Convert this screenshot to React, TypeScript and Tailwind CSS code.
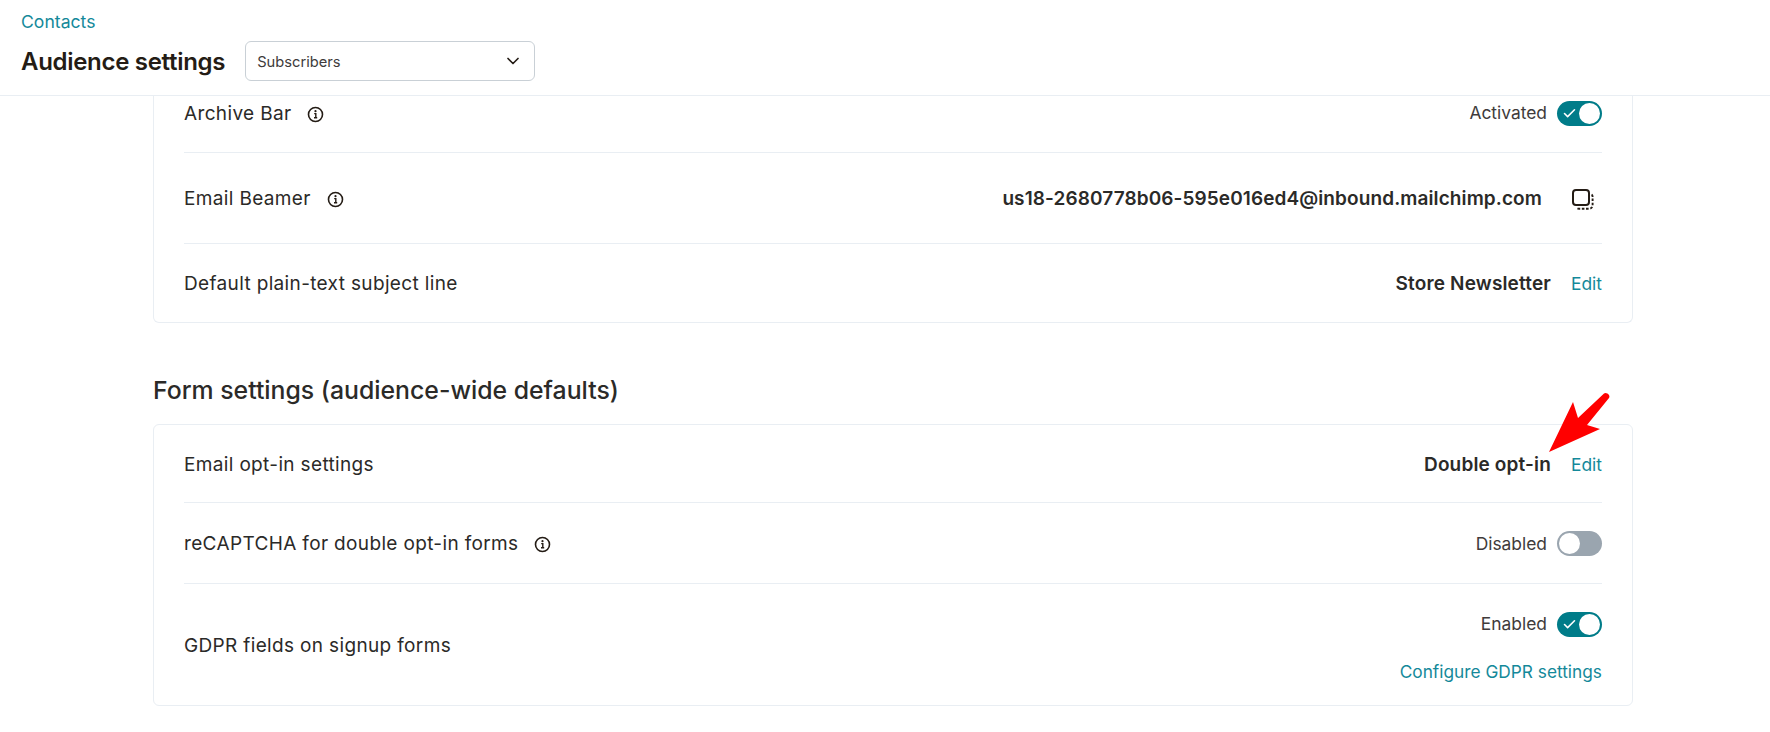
import { Check, ChevronDown } from 'lucide-react';
import type { ReactNode } from 'react';

function InfoIcon() {
  return (
    <svg width="17" height="17" viewBox="0 0 17 17" fill="none" className="shrink-0 text-[#241c15]">
      <circle cx="8.5" cy="8.5" r="7" stroke="currentColor" strokeWidth="1.6" />
      <circle cx="8.5" cy="5.2" r="1.1" fill="currentColor" />
      <path d="M7.2 7.6h1.6v4M7 11.8h3.2" stroke="currentColor" strokeWidth="1.4" />
    </svg>
  );
}

function CopyIcon() {
  return (
    <svg width="22" height="21" viewBox="0 0 22 21" fill="none" className="text-[#241c15]">
      <rect x="1" y="1" width="16" height="15" rx="3" stroke="currentColor" strokeWidth="2" />
      <path
        d="M19.6 5.5c.7.5 1 1.2 1 2.2v8.4c0 2.2-1.4 3.6-3.6 3.6H7c-1.3 0-2.2-.5-2.6-1.4"
        stroke="currentColor"
        strokeWidth="1.9"
        strokeDasharray="2.6 1.6"
      />
    </svg>
  );
}

function Toggle({ on, label }: { on: boolean; label: string }) {
  return (
    <div className="flex items-center gap-[10px]">
      <span className="text-[17.4px] text-[#403b3b]">{label}</span>
      <span
        className={`flex h-[25px] w-[45px] items-center rounded-full p-[2px] ${
          on ? 'justify-end bg-[#007c89]' : 'justify-start bg-[#9aa5af]'
        }`}
      >
        {on && <Check size={15} strokeWidth={2.5} className="mr-auto ml-[3px] text-white" />}
        <span className="h-[21px] w-[21px] rounded-full bg-white" />
      </span>
    </div>
  );
}

function Row({
  label,
  info,
  className,
  children,
}: {
  label: string;
  info?: boolean;
  className: string;
  children: ReactNode;
}) {
  return (
    <div className={`flex items-center justify-between border-[#e9eef3] ${className}`}>
      <div className="flex items-center gap-[16px] text-[19px] tracking-[0.35px] text-[#2b2a28]">
        {label}
        {info && <InfoIcon />}
      </div>
      <div>{children}</div>
    </div>
  );
}

function Value({ text }: { text: string }) {
  return (
    <div className="flex items-center gap-[20px]">
      <span className="text-[19px] font-semibold tracking-[0.15px] text-[#2b2a28]">{text}</span>
      <a className="text-[17.4px] text-[#14899a]">Edit</a>
    </div>
  );
}

export default function App() {
  return (
    <div className="relative h-[732px] overflow-hidden bg-white font-['Inter',sans-serif]">
      <header className="h-[96px] border-b border-[#e9eef3] pl-[21px] pt-[12px]">
        <a className="block text-[17.6px] leading-[20px] text-[#14899a]">Contacts</a>
        <div className="mt-[9px] flex items-center gap-[20px]">
          <h1 className="translate-y-[1px] text-[24px] font-semibold tracking-[-0.3px] text-[#241c15]">
            Audience settings
          </h1>
          <div className="flex h-[40px] w-[290px] items-center justify-between rounded-[6px] border border-[#c9d0d6] pl-[11px] pr-[11px] text-[14.7px] text-[#403b3b]">
            <span className="translate-y-[1px]">Subscribers</span>
            <ChevronDown size={20} className="text-[#241c15]" />
          </div>
        </div>
      </header>

      <main className="ml-[153px] w-[1480px]">
        <section className="rounded-b-[6px] border-x border-b border-[#e9eef3] px-[30px]">
          <Row label="Archive Bar" info className="h-[57px] items-start border-b pt-[4px]">
            <Toggle on label="Activated" />
          </Row>
          <Row label="Email Beamer" info className="h-[91px] border-b pt-[3px]">
            <div className="flex items-center gap-[30px] pr-[8px]">
              <span className="text-[19px] font-semibold tracking-[0.1px] text-[#2b2a28]">
                us18-2680778b06-595e016ed4@inbound.mailchimp.com
              </span>
              <CopyIcon />
            </div>
          </Row>
          <Row label="Default plain-text subject line" className="h-[78px] pt-[3px]">
            <Value text="Store Newsletter" />
          </Row>
        </section>

        <h2 className="mt-[51px] h-[50px] text-[24.8px] font-medium leading-[32px] text-[#2b2a28]">
          Form settings (audience-wide defaults)
        </h2>

        <section className="rounded-[6px] border border-[#e9eef3] px-[30px]">
          <Row label="Email opt-in settings" className="h-[78px] border-b pt-[3px]">
            <Value text="Double opt-in" />
          </Row>
          <Row label="reCAPTCHA for double opt-in forms" info className="h-[81px] border-b pt-[2px]">
            <Toggle on={false} label="Disabled" />
          </Row>
          <Row label="GDPR fields on signup forms" className="h-[121px] pt-[3px]">
            <div className="flex flex-col items-end gap-[21px] pt-[4px]">
              <Toggle on label="Enabled" />
              <a className="text-[17.3px] text-[#14899a]">Configure GDPR settings</a>
            </div>
          </Row>
        </section>
      </main>

      {/* red annotation arrow */}
      <svg
        className="pointer-events-none absolute left-[1540px] top-[385px]"
        width="80"
        height="75"
        viewBox="0 0 80 75"
        fill="none"
      >
        <path d="M9 67 33 17 38 33 64 8.5C66.5 6.5 71 10.5 69 13L47 40 60 44Z" fill="#ff0000" />
      </svg>
    </div>
  );
}
